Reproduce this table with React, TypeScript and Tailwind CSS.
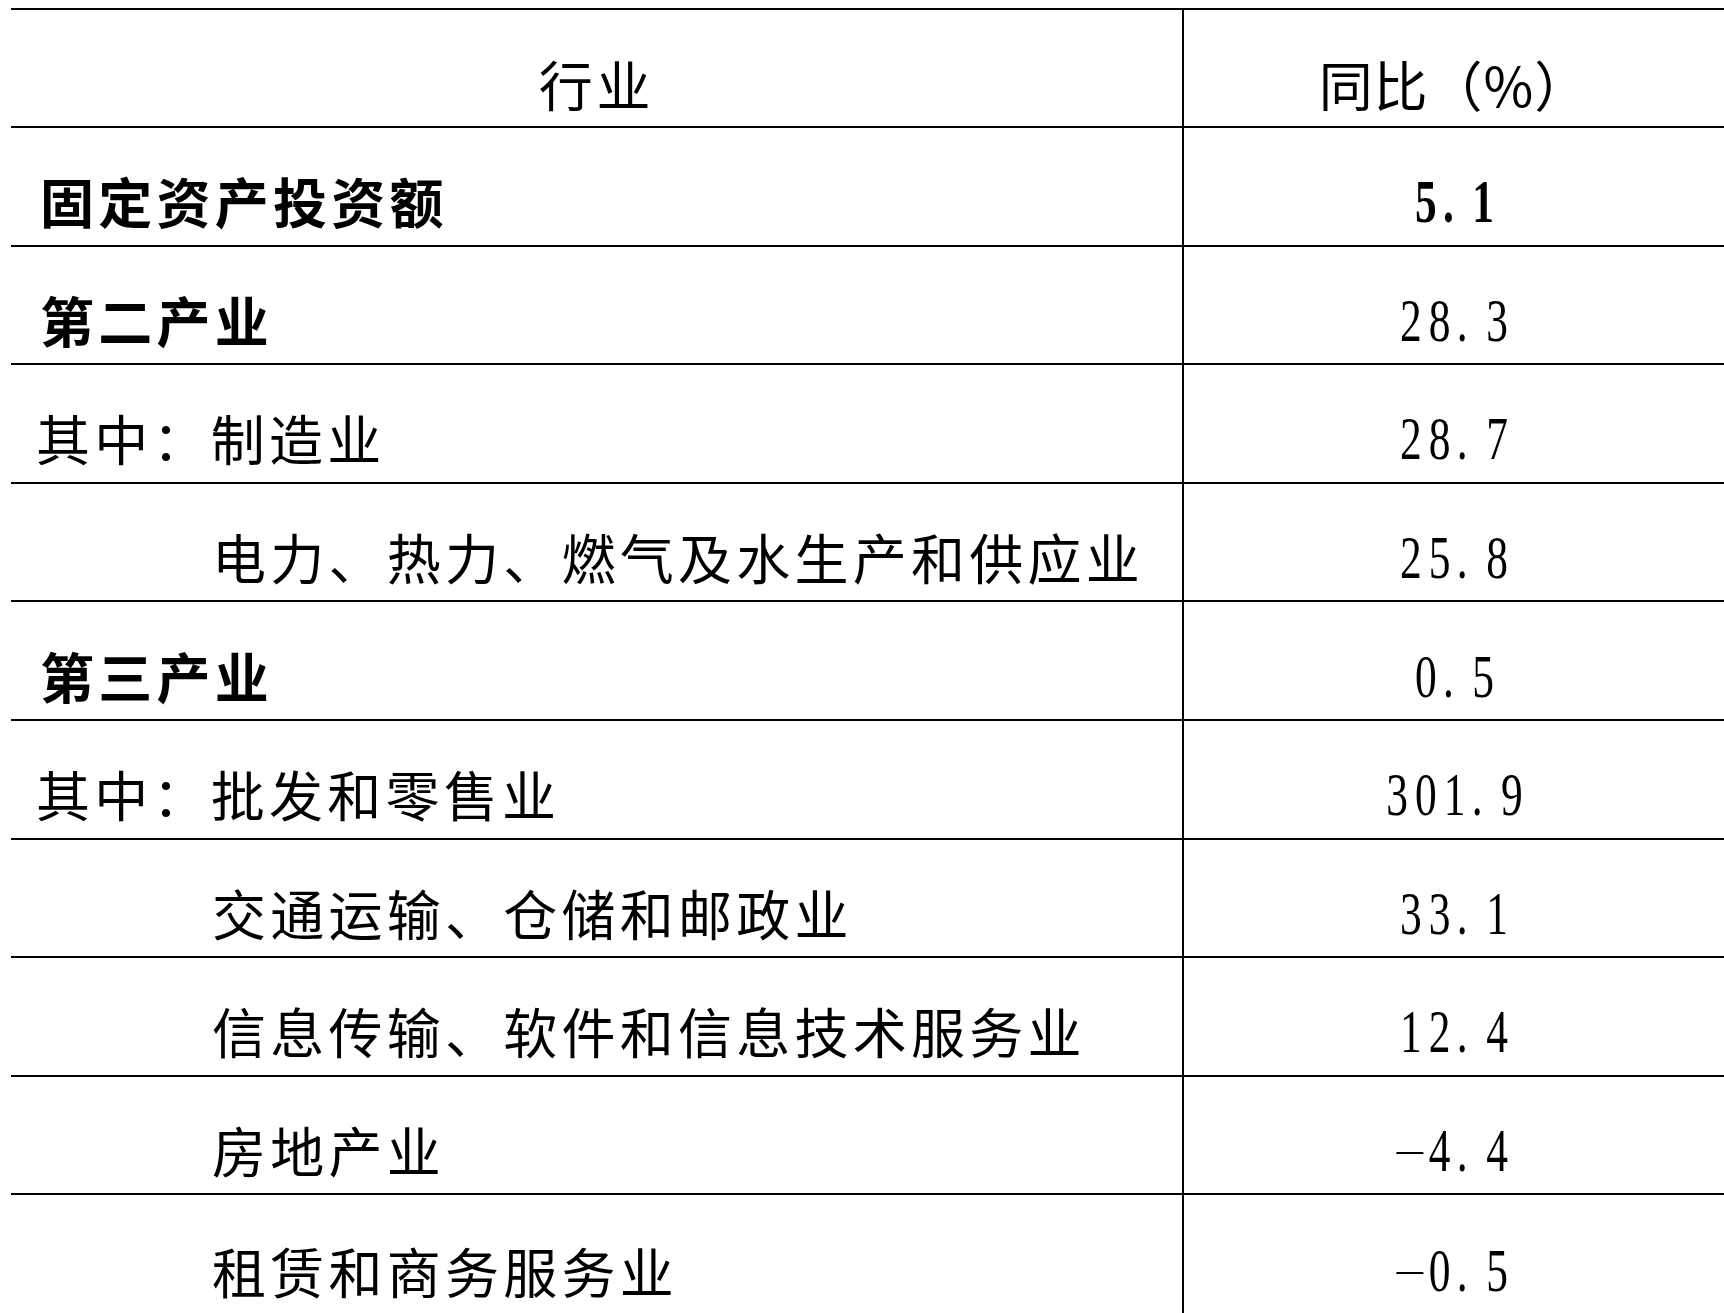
const rows = [
  { name: "固定资产投资额", value: "5.1", level: "bold" },
  { name: "第二产业", value: "28.3", level: "bold" },
  { name: "其中：制造业", value: "28.7", level: "normal" },
  { name: "电力、热力、燃气及水生产和供应业", value: "25.8", level: "indent" },
  { name: "第三产业", value: "0.5", level: "bold" },
  { name: "其中：批发和零售业", value: "301.9", level: "normal" },
  { name: "交通运输、仓储和邮政业", value: "33.1", level: "indent" },
  { name: "信息传输、软件和信息技术服务业", value: "12.4", level: "indent" },
  { name: "房地产业", value: "-4.4", level: "indent" },
  { name: "租赁和商务服务业", value: "-0.5", level: "indent" },
];

function Num({ value, bold }: { value: string; bold: boolean }) {
  // half-width cells like the original fangsong face, digits squeezed
  return (
    <span
      className={`inline-flex items-baseline scale-x-[0.7] font-['Liberation_Serif',serif] text-[62px] leading-none ${
        bold ? "font-bold" : "font-normal"
      }`}
    >
      {value.split("").map((ch, i) =>
        ch === "-" ? (
          <span key={i} className="relative -top-[9px] w-[41px] pr-[5px] text-right text-[38px]">
            —
          </span>
        ) : ch === "." ? (
          <span key={i} className="w-[41px] pl-[4px] text-left">
            .
          </span>
        ) : (
          <span key={i} className="w-[41px] text-center">
            {ch}
          </span>
        )
      )}
    </span>
  );
}

export default function App() {
  return (
    <div className="h-[1313px] w-[1724px] overflow-hidden bg-white pt-[8px] text-black font-['Noto_Sans_CJK_SC','Noto_Sans_CJK_JP',sans-serif]">
      <div className="ml-[11px] grid w-[1713px] grid-cols-[1171px_542px] border-t-2 border-black">
        <div className="flex h-[118px] items-center justify-center border-b-2 border-black pt-[32px] text-[54px] leading-none tracking-[3.75px]">
          行业
        </div>
        <div className="flex h-[118px] items-center justify-center border-b-2 border-l-2 border-black pt-[32px] text-[54px] leading-none tracking-[1px]">
          同比（%）
        </div>

        {rows.map((r, i) => {
          const last = i === rows.length - 1;
          return (
            <div key={r.name} className="contents">
              <div
                className={`flex items-center border-black pt-[30px] text-[54px] leading-none tracking-[4.25px] ${
                  last ? "h-[122px]" : "h-[118.6px] border-b-2"
                } ${
                  r.level === "bold" ? "pl-[29px] font-bold" : r.level === "indent" ? "pl-[201px] font-normal" : "pl-[25px] font-normal"
                }`}
              >
                {r.name}
              </div>
              <div
                className={`flex items-center justify-center border-l-2 border-black pt-[30px] ${
                  last ? "h-[122px] pb-[3.4px]" : "h-[118.6px] border-b-2"
                }`}
              >
                <Num value={r.value} bold={r.value === "5.1"} />
              </div>
            </div>
          );
        })}
      </div>
    </div>
  );
}
